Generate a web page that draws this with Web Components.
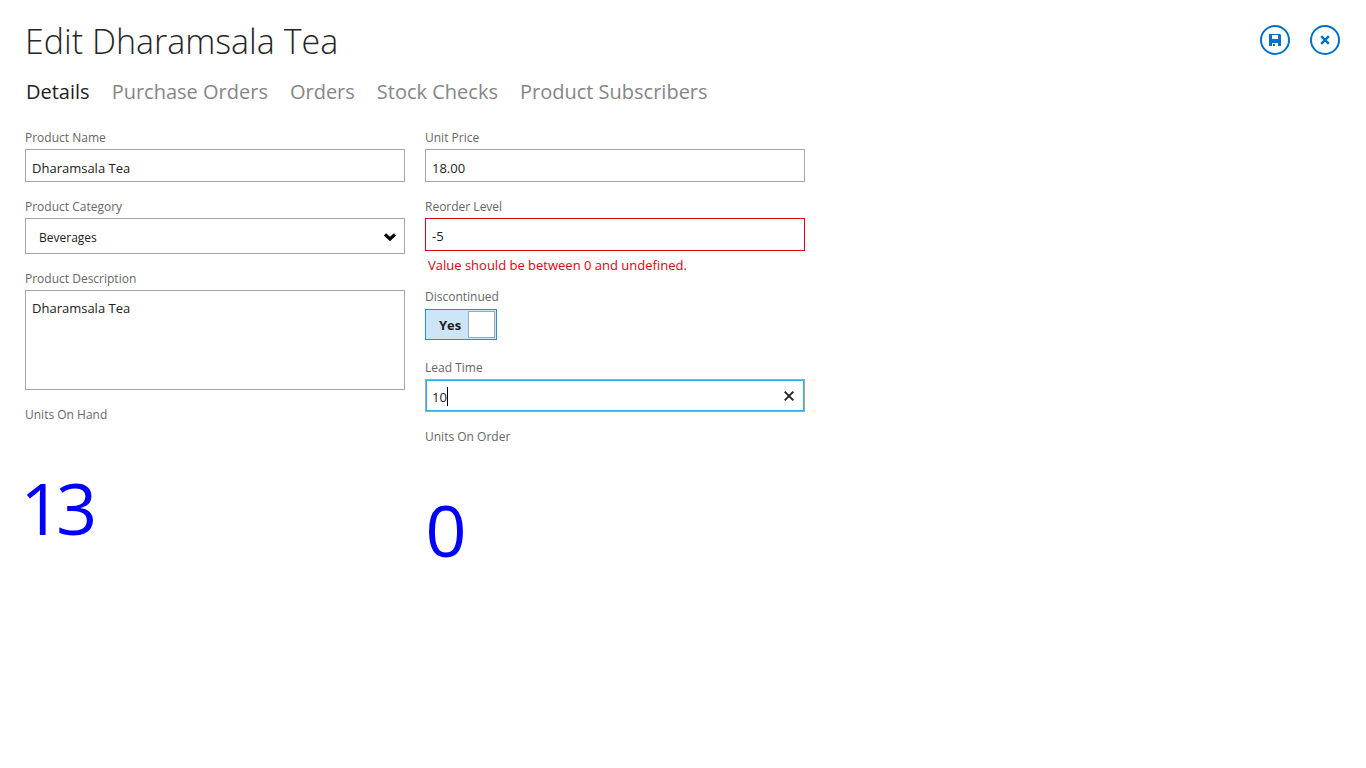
<!DOCTYPE html>
<html lang="en">
<head>
<meta charset="utf-8">
<title>Edit Dharamsala Tea</title>
<style>
  body { margin: 0; background: #fff; color: #262626; font-family: "Open Sans", "Noto Sans", sans-serif; }
</style>
</head>
<body>
<edit-screen heading="Edit Dharamsala Tea">
  <icon-button slot="actions" label="Save" icon="save"></icon-button>
  <icon-button slot="actions" label="Cancel" icon="close"></icon-button>
  <tab-bar slot="tabs" items="Details|Purchase Orders|Orders|Stock Checks|Product Subscribers"></tab-bar>
  <form-column>
    <text-field label="Product Name" value="Dharamsala Tea"></text-field>
    <select-field label="Product Category" value="Beverages"></select-field>
    <text-area-field label="Product Description" value="Dharamsala Tea"></text-area-field>
    <number-readout label="Units On Hand" value="13"></number-readout>
  </form-column>
  <form-column>
    <text-field label="Unit Price" value="18.00"></text-field>
    <text-field label="Reorder Level" value="-5" error="Value should be between 0 and undefined."></text-field>
    <toggle-field label="Discontinued" value="Yes"></toggle-field>
    <text-field label="Lead Time" value="10" active></text-field>
    <number-readout label="Units On Order" value="0"></number-readout>
  </form-column>
</edit-screen>

<script>
const fieldStyles = `
  :host { display: block; }
  * { box-sizing: border-box; }
  .caption { display: block; margin-bottom: 3px; font-size: 12px; line-height: 16px; color: #666; }
  input[type=text], textarea, select {
    display: block; width: 100%; margin: 0; border: 1px solid #a6a6a6; border-radius: 0;
    background: #fff; color: #212121; font-family: inherit; font-size: 13px; outline: none;
  }
`;

class BaseElement extends HTMLElement {
  connectedCallback() {
    if (this.shadowRoot) return;
    this.attachShadow({ mode: 'open' }).innerHTML = this.render();
  }
  attr(name) { return this.getAttribute(name) || ''; }
}

customElements.define('edit-screen', class extends BaseElement {
  render() {
    return `<style>
      :host { display: block; padding: 16px 26px 24px 25px; }
      header { display: flex; align-items: center; justify-content: space-between; height: 50px; }
      h1 { margin: 0; font-size: 34px; font-weight: 300; line-height: 52px; }
      .actions { display: flex; gap: 20px; }
      main { display: grid; grid-template-columns: repeat(2, minmax(0, 380px)); gap: 20px; margin-top: 23px; align-items: start; }
    </style>
    <header><h1>${this.attr('heading')}</h1><div class="actions"><slot name="actions"></slot></div></header>
    <slot name="tabs"></slot>
    <main><slot></slot></main>`;
  }
});

const icons = {
  save: '<path fill="currentColor" fill-rule="evenodd" d="M9 9h11l1 1v11H9zM12 10v4h6v-4zM12 18v3h1v-2h2v2h3v-3z"/>',
  close: '<path fill="none" stroke="currentColor" stroke-width="2.4" d="M11.2 11.2l7.6 7.6M18.8 11.2l-7.6 7.6"/>'
};

customElements.define('icon-button', class extends BaseElement {
  render() {
    return `<style>
      :host { display: block; margin-top: -2px; }
      button { display: block; width: 30px; height: 30px; padding: 0; border: 0; background: none; color: #0072c6; }
      svg { display: block; }
    </style>
    <button type="button" aria-label="${this.attr('label')}"><svg width="30" height="30" viewBox="0 0 30 30">
      <circle cx="15" cy="15" r="14" fill="none" stroke="currentColor" stroke-width="2"/>${icons[this.attr('icon')]}</svg></button>`;
  }
});

customElements.define('tab-bar', class extends BaseElement {
  render() {
    const links = this.attr('items').split('|').map((t, i) =>
      `<a href="#"${i ? '' : ' aria-current="page"'}>${t}</a>`).join('');
    return `<style>
      :host { display: block; margin-top: 11px; }
      nav { display: flex; gap: 22px; padding-left: 1px; }
      a { color: #868686; text-decoration: none; font-size: 20px; line-height: 30px; white-space: nowrap; }
      a[aria-current] { color: #212121; }
    </style><nav>${links}</nav>`;
  }
});

customElements.define('form-column', class extends BaseElement {
  render() {
    return `<style>:host { display: flex; flex-direction: column; gap: 17px; }</style><slot></slot>`;
  }
});

customElements.define('text-field', class extends BaseElement {
  render() {
    const error = this.attr('error');
    const active = this.hasAttribute('active');
    return `<style>${fieldStyles}
      .box { position: relative; font-size: 13px; }
      input[type=text] { height: 33px; padding: 4px 6px 0; }
      input[aria-invalid] { border-color: #dc000f; }
      .error { margin: 0; padding: 5px 3px 0; font-size: 13px; line-height: 18px; margin-bottom: -2px; color: #dc000f; }
      .active input { box-shadow: inset 0 0 0 1px #2fb0e8; caret-color: transparent; }
      .active input, input[aria-invalid] { padding-top: 2px; }
      .caret { position: absolute; left: calc(7px + 2ch); top: 8px; width: 1px; height: 19px; background: #000; }
      button { position: absolute; right: 8px; top: 9px; width: 16px; height: 16px; padding: 0; border: 0; background: none; color: #212121; }
      svg { display: block; }
    </style>
    <label class="caption" for="control">${this.attr('label')}</label>
    <div class="box${active ? ' active' : ''}">
      <input id="control" type="text" value="${this.attr('value')}"${error ? ' aria-invalid="true" aria-describedby="error"' : ''}>
      ${active ? `<span class="caret"></span><button type="button" aria-label="Clear"><svg width="16" height="16" viewBox="0 0 16 16">
        <path d="M3.7 3.7l8.6 8.6M12.3 3.7l-8.6 8.6" stroke="currentColor" stroke-width="1.8"/></svg></button>` : ''}
    </div>
    ${error ? `<p class="error" id="error">${error}</p>` : ''}`;
  }
});

customElements.define('select-field', class extends BaseElement {
  render() {
    return `<style>${fieldStyles}
      .box { position: relative; }
      select { appearance: none; height: 36px; padding: 2px 30px 0 13px; font-size: 12px; }
      svg { position: absolute; right: 8px; top: 14px; pointer-events: none; }
    </style>
    <label class="caption" for="control">${this.attr('label')}</label>
    <div class="box"><select id="control"><option>${this.attr('value')}</option></select>
      <svg width="14" height="10" viewBox="0 0 14 10"><path d="M2 2.4l5 4.6 5-4.6" fill="none" stroke="#000" stroke-width="3.2"/></svg></div>`;
  }
});

customElements.define('text-area-field', class extends BaseElement {
  render() {
    return `<style>${fieldStyles}
      textarea { height: 100px; padding: 8px 6px; line-height: 19px; resize: none; }
    </style>
    <label class="caption" for="control">${this.attr('label')}</label>
    <textarea id="control">${this.attr('value')}</textarea>`;
  }
});

customElements.define('toggle-field', class extends BaseElement {
  render() {
    return `<style>${fieldStyles}
      .switch { display: flex; align-items: center; justify-content: space-between; position: relative;
        width: 72px; height: 31px; margin: 4px 0 3px; padding: 0 1px 0 13px; border: 1px solid #2a8dd4; background: #cde6f7; }
      .switch span { font-size: 13px; font-weight: 700; line-height: 18px; color: #212121; }
      .switch i { width: 27px; height: 27px; border: 1px solid #a6a6a6; background: #fff; }
      .caption { margin-bottom: 0; }
      input { position: absolute; inset: 0; width: 100%; height: 100%; margin: 0; opacity: 0; }
    </style>
    <label class="caption" for="control">${this.attr('label')}</label>
    <div class="switch"><span>${this.attr('value')}</span><i></i><input id="control" type="checkbox" role="switch" checked></div>`;
  }
});

customElements.define('number-readout', class extends BaseElement {
  render() {
    return `<style>${fieldStyles}
      .caption { margin-bottom: 36px; }
      output { display: block; font-size: 72px; line-height: 96px; font-variant-numeric: proportional-nums; color: #00f; }
    </style>
    <label class="caption" for="control">${this.attr('label')}</label>
    <output id="control">${this.attr('value')}</output>`;
  }
});
</script>
</body>
</html>
